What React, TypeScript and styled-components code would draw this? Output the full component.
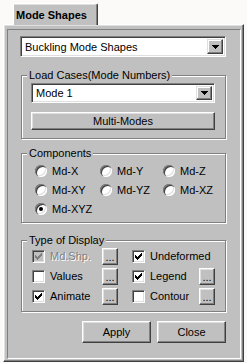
import styled, { createGlobalStyle } from "styled-components";

const GlobalStyle = createGlobalStyle`
  html, body {
    margin: 0;
    padding: 0;
    background: #fcf9f9;
  }
  body {
    font-family: "Liberation Sans", Arial, sans-serif;
    font-size: 11px;
    color: #000;
  }
`;

const Window = styled.div`
  width: 247px;
  height: 363px;
  background: #fcf9f9;
  overflow: hidden;
`;

const TabStrip = styled.div`
  height: 24px;
  padding-left: 13px;
  display: flex;
  align-items: flex-end;
`;

const Tab = styled.div`
  position: relative;
  z-index: 1;
  box-sizing: border-box;
  width: 85px;
  height: 22px;
  margin-bottom: -1px;
  padding-left: 2px;
  display: flex;
  align-items: center;
  background: #c0c0c0;
  border-top: 1px solid #fff;
  border-left: 1px solid #fff;
  border-right: 1px solid #404040;
  border-top-right-radius: 2px;
  box-shadow: inset -1px 0 #808080, inset 0 1px #dfdfdf;
  font-weight: bold;
  font-size: 11px;
`;

const Panel = styled.div`
  box-sizing: border-box;
  margin-left: 3px;
  width: 241px;
  height: 338px;
  padding: 4px 3px;
  background: #c0c0c0;
  border: 1px solid;
  border-color: #fff #404040 #404040 #fff;
  box-shadow: inset -1px -1px #808080, inset 1px 1px #dfdfdf;
`;

const Inner = styled.div`
  box-sizing: border-box;
  width: 234px;
  height: 330px;
  border: 1px solid;
  border-color: #808080 #fff #fff #808080;
  display: flex;
  flex-direction: column;
`;

const Combo = styled.div<{ $w: number; $h: number }>`
  box-sizing: border-box;
  width: ${(p) => p.$w}px;
  height: ${(p) => p.$h}px;
  padding: 2px;
  display: flex;
  align-items: center;
  background: #fff;
  border: 1px solid;
  border-color: #808080 #fff #fff #808080;
  box-shadow: inset 1px 1px #404040, inset -1px -1px #dfdfdf;
`;

const ComboText = styled.span`
  flex: 1;
  padding-left: 2px;
  white-space: nowrap;
`;

const ComboButton = styled.div`
  box-sizing: border-box;
  width: 16px;
  align-self: stretch;
  display: flex;
  align-items: center;
  justify-content: center;
  background: #c0c0c0;
  border: 1px solid;
  border-color: #dfdfdf #404040 #404040 #dfdfdf;
  box-shadow: inset -1px -1px #808080, inset 1px 1px #fff;
`;

const TopCombo = styled.div`
  margin: 6px 0 0 12px;
`;

const Group = styled.div<{ $h: number; $top: number }>`
  position: relative;
  box-sizing: border-box;
  margin: ${(p) => p.$top}px 0 0 13px;
  width: 205px;
  height: ${(p) => p.$h}px;
  border: 1px solid #808080;
  box-shadow: 1px 1px 0 #fff, inset 1px 1px 0 #fff;
`;

const Legend = styled.span`
  position: absolute;
  top: -7px;
  left: 5px;
  padding: 0 2px;
  line-height: 13px;
  background: #c0c0c0;
  white-space: nowrap;
`;

const LoadBody = styled.div`
  padding: 7px 0 0 9px;
  display: flex;
  flex-direction: column;
  gap: 9px;
`;

const PushButton = styled.div<{ $w: number; $h: number }>`
  box-sizing: border-box;
  width: ${(p) => p.$w}px;
  height: ${(p) => p.$h}px;
  display: flex;
  align-items: center;
  justify-content: center;
  background: #c0c0c0;
  border: 1px solid;
  border-color: #fff #404040 #404040 #fff;
  box-shadow: inset -1px -1px #808080, inset 1px 1px #dfdfdf;
  white-space: nowrap;
`;

const RadioGrid = styled.div`
  padding: 7px 0 0 13px;
  display: grid;
  grid-template-columns: 65px 63px auto;
  grid-auto-rows: 19px;
`;

const Option = styled.div<{ $disabled?: boolean }>`
  display: flex;
  align-items: center;
  gap: 5px;
  white-space: nowrap;
  color: ${(p) => (p.$disabled ? "#808080" : "#000")};
  text-shadow: ${(p) => (p.$disabled ? "1px 1px 0 #fff" : "none")};
`;

const RadioCircle = styled.span<{ $on?: boolean }>`
  box-sizing: border-box;
  flex: none;
  width: 12px;
  height: 12px;
  border-radius: 50%;
  background: #fff;
  display: flex;
  align-items: center;
  justify-content: center;
  box-shadow: inset 1px 1px 0 #808080, inset 2px 2px 0 #404040,
    inset -1px -1px 0 #fff, inset -2px -2px 0 #dfdfdf;
  &::after {
    content: "";
    width: 4px;
    height: 4px;
    border-radius: 50%;
    background: ${(p) => (p.$on ? "#000" : "transparent")};
  }
`;

const CheckBox = styled.span<{ $disabled?: boolean }>`
  box-sizing: border-box;
  flex: none;
  width: 13px;
  height: 13px;
  display: flex;
  align-items: center;
  justify-content: center;
  background: ${(p) => (p.$disabled ? "#c0c0c0" : "#fff")};
  border: 1px solid;
  border-color: #808080 #fff #fff #808080;
  box-shadow: inset 1px 1px #404040, inset -1px -1px #dfdfdf;
`;

const DisplayGrid = styled.div`
  padding: 5px 0 0 10px;
  display: grid;
  grid-template-columns: 86px 83px;
  grid-auto-rows: 20px;
  column-gap: 14px;
`;

const Cell = styled.div`
  display: flex;
  align-items: center;
`;

const CellLabel = styled.div`
  flex: 1;
`;

const Dots = styled(PushButton)`
  align-items: flex-end;
  padding-bottom: 3px;
  line-height: 8px;
`;

const ButtonRow = styled.div`
  margin: 9px 0 0 74px;
  display: flex;
  gap: 6px;
`;

function Arrow() {
  return (
    <svg width="7" height="4" viewBox="0 0 7 4" shapeRendering="crispEdges">
      <path d="M0 0h7v1h-1v1h-1v1h-1v1h-1v-1h-1v-1h-1v-1h-1z" fill="#000" />
    </svg>
  );
}

function Check({ color }: { color: string }) {
  return (
    <svg width="7" height="7" viewBox="0 0 7 7" shapeRendering="crispEdges">
      <path
        d="M0 2h1v3h-1zM1 3h1v3h-1zM2 4h1v3h-1zM3 3h1v3h-1zM4 2h1v3h-1zM5 1h1v3h-1zM6 0h1v3h-1z"
        fill={color}
      />
    </svg>
  );
}

function Radio({ label, on }: { label: string; on?: boolean }) {
  return (
    <Option>
      <RadioCircle $on={on} />
      {label}
    </Option>
  );
}

function CheckItem({
  label,
  checked,
  disabled,
  dots,
}: {
  label: string;
  checked?: boolean;
  disabled?: boolean;
  dots?: boolean;
}) {
  return (
    <Cell>
      <CellLabel>
        <Option $disabled={disabled}>
          <CheckBox $disabled={disabled}>
            {checked && <Check color={disabled ? "#808080" : "#000"} />}
          </CheckBox>
          {label}
        </Option>
      </CellLabel>
      {dots && (
        <Dots $w={16} $h={17}>
          ...
        </Dots>
      )}
    </Cell>
  );
}

export default function App() {
  return (
    <Window>
      <GlobalStyle />
      <TabStrip>
        <Tab>Mode Shapes</Tab>
      </TabStrip>
      <Panel>
        <Inner>
          <TopCombo>
            <Combo $w={206} $h={21}>
              <ComboText>Buckling Mode Shapes</ComboText>
              <ComboButton>
                <Arrow />
              </ComboButton>
            </Combo>
          </TopCombo>

          <Group $top={18} $h={64}>
            <Legend>Load Cases(Mode Numbers)</Legend>
            <LoadBody>
              <Combo $w={184} $h={20}>
                <ComboText>Mode 1</ComboText>
                <ComboButton>
                  <Arrow />
                </ComboButton>
              </Combo>
              <PushButton $w={184} $h={18}>
                Multi-Modes
              </PushButton>
            </LoadBody>
          </Group>

          <Group $top={14} $h={70}>
            <Legend>Components</Legend>
            <RadioGrid>
              <Radio label="Md-X" />
              <Radio label="Md-Y" />
              <Radio label="Md-Z" />
              <Radio label="Md-XY" />
              <Radio label="Md-YZ" />
              <Radio label="Md-XZ" />
              <Radio label="Md-XYZ" on />
            </RadioGrid>
          </Group>

          <Group $top={17} $h={72}>
            <Legend>Type of Display</Legend>
            <DisplayGrid>
              <CheckItem label="Md.Shp." checked disabled dots />
              <CheckItem label="Undeformed" checked />
              <CheckItem label="Values" dots />
              <CheckItem label="Legend" checked dots />
              <CheckItem label="Animate" checked dots />
              <CheckItem label="Contour" dots />
            </DisplayGrid>
          </Group>

          <ButtonRow>
            <PushButton $w={69} $h={22}>
              Apply
            </PushButton>
            <PushButton $w={69} $h={22}>
              Close
            </PushButton>
          </ButtonRow>
        </Inner>
      </Panel>
    </Window>
  );
}
